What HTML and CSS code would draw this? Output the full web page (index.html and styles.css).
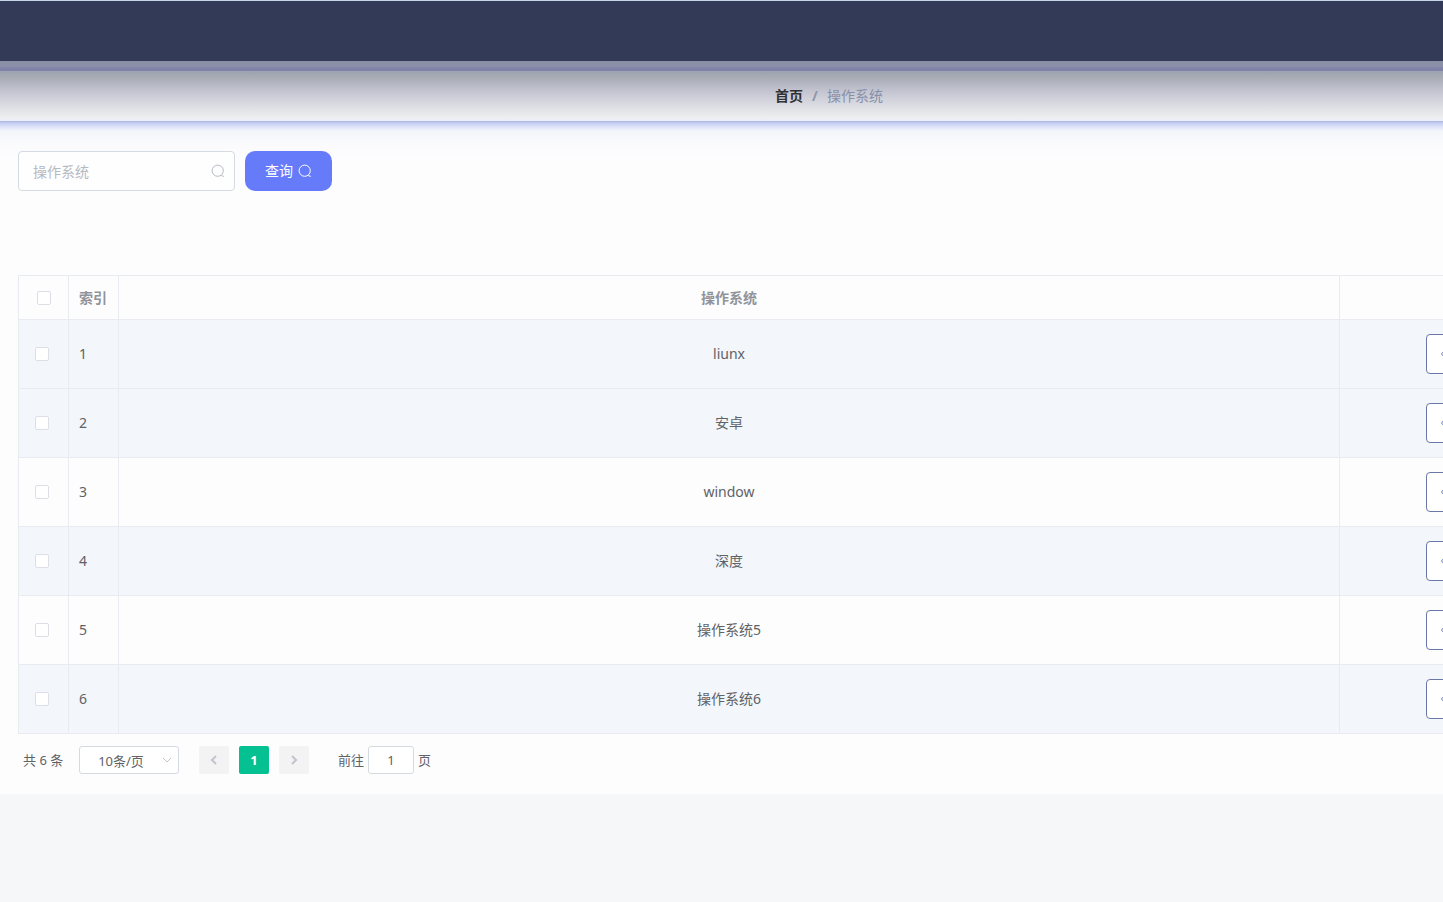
FILE: index.html
```html
<!DOCTYPE html>
<html lang="zh-CN">
<head>
<meta charset="utf-8">
<meta name="viewport" content="width=device-width, initial-scale=1">
<title>操作系统</title>
<link rel="stylesheet" href="styles.css">
</head>
<body>
<svg class="sprite" aria-hidden="true">
  <symbol id="search" viewBox="0 0 14 14"><circle cx="6.7" cy="6.7" r="5.6"/><path d="M10.2 11.600l2.600 .8"/></symbol>
  <symbol id="view" viewBox="0 0 14 14"><path d="M.6 7C2 4.300 4.300 3 7 3s5 1.300 6.400 4C12 9.700 9.700 11 7 11S2 9.700.6 7z"/><circle cx="7" cy="7" r="2"/></symbol>
</svg>
<div class="page">
  <header class="topbar"></header>
  <div class="band"></div>
  <nav class="breadcrumb">
    <a class="crumb-home" href="#">首页</a><span class="crumb-sep">/</span><span class="crumb-current">操作系统</span>
  </nav>
  <main class="content">
    <form class="search">
      <div class="field">
        <input class="field-input" type="text" placeholder="操作系统" aria-label="操作系统">
        <svg class="icon field-icon"><use href="#search"/></svg>
      </div>
      <button class="query" type="button">查询<svg class="icon"><use href="#search"/></svg></button>
    </form>
    <table class="grid">
      <colgroup><col class="col-small"><col class="col-small"><col><col class="col-actions"></colgroup>
      <thead>
        <tr><th><input class="check" type="checkbox"></th><th class="left">索引</th><th>操作系统</th><th></th></tr>
      </thead>
      <tbody>
        <tr class="tinted"><td class="pick"><input class="check" type="checkbox"></td><td class="left">1</td><td>liunx</td><td class="actions"><button class="view" type="button"><svg class="icon"><use href="#view"/></svg></button></td></tr>
        <tr class="tinted"><td class="pick"><input class="check" type="checkbox"></td><td class="left">2</td><td>安卓</td><td class="actions"><button class="view" type="button"><svg class="icon"><use href="#view"/></svg></button></td></tr>
        <tr><td class="pick"><input class="check" type="checkbox"></td><td class="left">3</td><td>window</td><td class="actions"><button class="view" type="button"><svg class="icon"><use href="#view"/></svg></button></td></tr>
        <tr class="tinted"><td class="pick"><input class="check" type="checkbox"></td><td class="left">4</td><td>深度</td><td class="actions"><button class="view" type="button"><svg class="icon"><use href="#view"/></svg></button></td></tr>
        <tr><td class="pick"><input class="check" type="checkbox"></td><td class="left">5</td><td>操作系统5</td><td class="actions"><button class="view" type="button"><svg class="icon"><use href="#view"/></svg></button></td></tr>
        <tr class="tinted"><td class="pick"><input class="check" type="checkbox"></td><td class="left">6</td><td>操作系统6</td><td class="actions"><button class="view" type="button"><svg class="icon"><use href="#view"/></svg></button></td></tr>
      </tbody>
    </table>
    <div class="pager">
      <span class="total">共 6 条</span>
      <div class="size">
        <select class="size-select" aria-label="条/页"><option>10条/页</option></select>
        <svg class="size-arrow" viewBox="0 0 10 10"><path d="M1 3l4 4 4-4"/></svg>
      </div>
      <div class="pages">
        <button class="step" type="button" disabled><svg class="chevron" viewBox="0 0 10 10"><path d="M7 1L3 5l4 4"/></svg></button>
        <button class="step current" type="button">1</button>
        <button class="step" type="button" disabled><svg class="chevron" viewBox="0 0 10 10"><path d="M3 1l4 4-4 4"/></svg></button>
      </div>
      <label class="jump">前往<input class="jump-input" type="text" value="1">页</label>
    </div>
  </main>
</div>
</body>
</html>
```
FILE: styles.css
```css
* { box-sizing: border-box; }
html { overflow-x: hidden; }
body {
  margin: 0;
  overflow-x: hidden;
  background: #f5f7f9;
  color: #606266;
  font: 14px/20px "Noto Sans", "Noto Sans CJK SC", sans-serif;
}
button, input, select { font: inherit; margin: 0; }
.sprite { display: none; }
.icon { width: 14px; height: 14px; fill: none; stroke: currentColor; stroke-width: 1; }
/* The table is wider than the viewport; the action column runs past the edge. */
.page { width: calc(100% + 215px); }
.topbar { height: 61px; border-top: 1px solid #c5d5e5; background: #323a57; }
.band { height: 10px; background: linear-gradient(#898fa2, #8b90aa 50%, #7f80a7 80%, #8183a8); }
.breadcrumb {
  display: flex;
  justify-content: center;
  align-items: center;
  height: 50px;
  background: linear-gradient(#9da2b3, #a4a8b0 8%, #c3c4d0 40%, #e0e1e6 75%, #efeff0 94%, #e8edff);
}
.crumb-home { color: #303133; font-weight: 700; text-decoration: none; }
.crumb-sep { margin: 0 9px; color: #9096a8; font-weight: 700; }
.crumb-current { color: #8790aa; }
.content {
  padding: 30px 18px 20px;
  background: linear-gradient(#a9b6dc, #c4cdf2 2px, #dfe3fa 6px, #f3f6fa 10px, #fbfbfd 24px, #fdfdfe 40px);
}
.search { display: flex; gap: 10px; margin-bottom: 84px; }
.field { position: relative; width: 217px; }
.field-input {
  width: 100%;
  height: 40px;
  padding: 0 30px 0 14px;
  border: 1px solid #d5dae2;
  border-radius: 4px;
  background: #fefefe;
  color: #606266;
}
.field-input::placeholder { color: #b5bac3; }
.field-icon { position: absolute; top: 13px; right: 10px; color: #b5bac3; }
.query {
  display: flex;
  justify-content: center;
  align-items: center;
  gap: 5px;
  width: 87px;
  height: 40px;
  border: 0;
  border-radius: 10px;
  background: #667bfa;
  color: #fff;
}
.grid {
  width: 100%;
  table-layout: fixed;
  border-collapse: separate;
  border-spacing: 0;
  border-top: 1px solid #e8ecf0;
  border-left: 1px solid #e8ecf0;
}
.col-small { width: 50px; }
.col-actions { width: 300px; }
.grid th, .grid td {
  height: 69px;
  padding: 0 10px;
  border-right: 1px solid #e8ecf0;
  border-bottom: 1px solid #e8ecf0;
  text-align: center;
}
.grid th { height: 44px; color: #909399; }
.grid .left { text-align: left; }
.grid .pick { padding-right: 14px; }
.tinted { background: #f3f6fa; }
.check {
  display: block;
  width: 14px;
  height: 14px;
  margin: 0 auto;
  appearance: none;
  border: 1px solid #dcdfe6;
  border-radius: 2px;
  background: #fff;
}
.grid .actions { padding-left: 86px; }
.view {
  display: flex;
  align-items: center;
  width: 44px;
  height: 40px;
  padding: 0 14px;
  border: 1px solid #6a78a8;
  border-radius: 4px;
  background: #fff;
  color: #6a78c8;
}
.pager {
  display: flex;
  align-items: center;
  padding: 12px 5px 0;
  font-size: 13px;
  line-height: 28px;
}
.total { width: 56px; }
.size { position: relative; width: 100px; height: 28px; }
.size-select {
  display: block;
  width: 100%;
  height: 28px;
  padding: 0 24px 0 8px;
  appearance: none;
  border: 1px solid #d5dae2;
  border-radius: 3px;
  background: #fff;
  color: #606266;
  text-align-last: center;
}
.size-arrow { position: absolute; top: 9px; right: 7px; width: 10px; height: 10px; fill: none; stroke: #c0c4cc; }
.pages { display: flex; gap: 10px; margin: 0 29px 0 20px; }
.step {
  display: flex;
  justify-content: center;
  align-items: center;
  width: 30px;
  height: 28px;
  padding: 0;
  border: 0;
  border-radius: 2px;
  background: #f3f3f4;
  color: #c0c4cc;
}
.current { background: #05c091; color: #fff; font-weight: 700; }
.chevron { width: 10px; height: 10px; fill: none; stroke: currentColor; stroke-width: 2; }
.jump { display: flex; align-items: center; gap: 4px; }
.jump-input {
  width: 46px;
  height: 28px;
  padding: 0;
  border: 1px solid #d5dae2;
  border-radius: 3px;
  background: #fff;
  color: #606266;
  text-align: center;
}
```
